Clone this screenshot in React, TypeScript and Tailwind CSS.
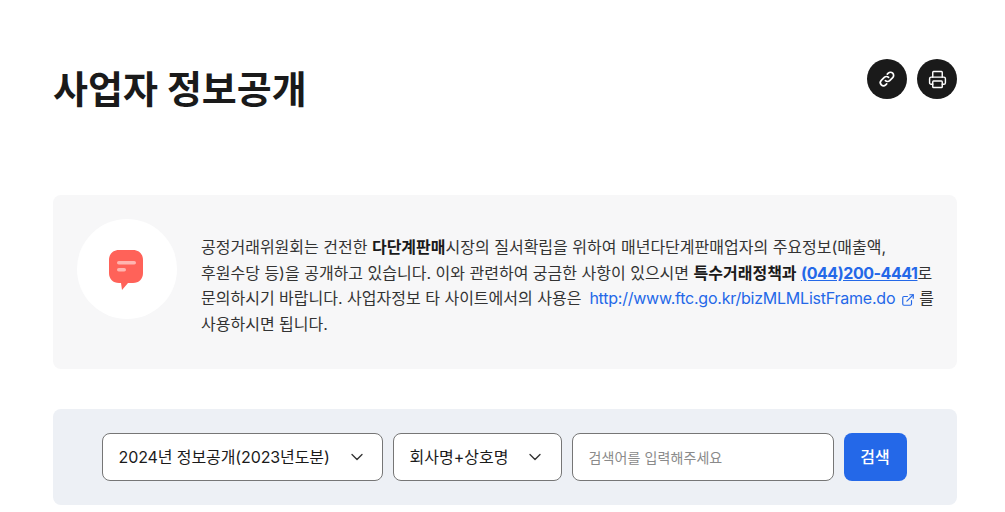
import { Printer, ChevronDown, ExternalLink } from 'lucide-react';

const font = "font-['Inter','Noto_Sans_CJK_KR',sans-serif]";

function SelectBox({ label, className }: { label: React.ReactNode; className: string }) {
  return (
    <div className={`flex h-12 items-center justify-between rounded-lg border border-[#767676] bg-white ${className}`}>
      <span className="text-base text-[#1a1a1a]">{label}</span>
      <ChevronDown size={20} strokeWidth={1.6} className="text-[#333]" />
    </div>
  );
}

export default function App() {
  return (
    <div className={`${font} h-[512px] w-[1005px] overflow-hidden bg-white pl-[53px] pr-[48px] pt-[59px] text-[#1a1a1a]`}>
      <div className="flex items-start justify-between">
        <h1 className="pt-[5px] text-[38px] font-bold leading-[50px]">사업자 정보공개</h1>
        <div className="flex gap-2.5">
          <button className="flex h-10 w-10 items-center justify-center rounded-full bg-[#1a1a1a] text-white">
            <svg width="20" height="20" viewBox="0 0 20 20" fill="none" stroke="currentColor" strokeWidth="1.7" strokeLinecap="round">
              <path d="M8.4 11.6a3 3 0 0 0 4.3 0l3-3a3.1 3.1 0 0 0-4.4-4.4l-1 1" />
              <path d="M11.6 8.4a3 3 0 0 0-4.3 0l-3 3a3.1 3.1 0 0 0 4.4 4.4l1-1" />
            </svg>
          </button>
          <button className="flex h-10 w-10 items-center justify-center rounded-full bg-[#1a1a1a] text-white">
            <Printer size={19} strokeWidth={1.8} />
          </button>
        </div>
      </div>

      <div className="mt-[81px] flex h-[174px] items-start gap-6 rounded-lg bg-[#f7f7f8] pl-6 pr-5 pt-6">
        <div className="flex h-[100px] w-[100px] shrink-0 items-center justify-center rounded-full bg-white">
          <svg width="36" height="42" viewBox="0 0 36 42" className="mt-[2px] -translate-x-px">
            <path d="M11 1h14c6 0 10 4 10 10v13c0 6-4 10-10 10h-5l-6 7-1-7h-2C5 34 1 30 1 24V11C1 5 5 1 11 1z" fill="#ff6259" />
            <rect x="9" y="12" width="19" height="3.5" rx="1.75" fill="#ffb5b0" />
            <rect x="9" y="19" width="9" height="3.5" rx="1.75" fill="#ffb5b0" />
          </svg>
        </div>
        <p className="whitespace-nowrap pt-4 text-base leading-[1.6] text-[#333]">
          공정거래위원회는 건전한 <b className="font-bold text-[#1a1a1a]">다단계판매</b>시장의 질서확립을 위하여 매년다단계판매업자의 주요정보(매출액,
          <br />
          후원수당 등)을 공개하고 있습니다. 이와 관련하여 궁금한 사항이 있으시면{' '}
          <b className="font-bold text-[#1a1a1a]">특수거래정책과</b>{' '}
          <b className="font-bold tracking-[-0.46px] text-[#2468e8] underline">(044)200-4441</b>로
          <br />
          문의하시기 바랍니다. 사업자정보 타 사이트에서의 사용은
          <span className="ml-2 tracking-[-0.23px] text-[#2468e8]">http://www.ftc.go.kr/bizMLMListFrame.do</span>
          <ExternalLink size={14} className="ml-1.5 mr-1 inline text-[#2468e8]" />를
          <br />
          사용하시면 됩니다.
        </p>
      </div>

      <div className="mt-10 flex h-[96px] items-center justify-center gap-2.5 rounded-lg bg-[#edf0f5] pr-0.5">
        <SelectBox
          label={<span className="tracking-[-0.1px]">2024년 정보공개(2023년도분)</span>}
          className="w-[281px] pl-[16px] pr-[15px]"
        />
        <SelectBox label="회사명+상호명" className="w-[169px] pl-[16px] pr-[16px]" />
        <div className="flex h-12 w-[262px] items-center rounded-lg border border-[#767676] bg-white pl-[16px] text-[14px] tracking-[0.1px] text-[#8a8a8a]">
          검색어를 입력해주세요
        </div>
        <button className="h-12 w-[63px] rounded-lg bg-[#2468e8] text-base font-medium text-white">검색</button>
      </div>
    </div>
  );
}
